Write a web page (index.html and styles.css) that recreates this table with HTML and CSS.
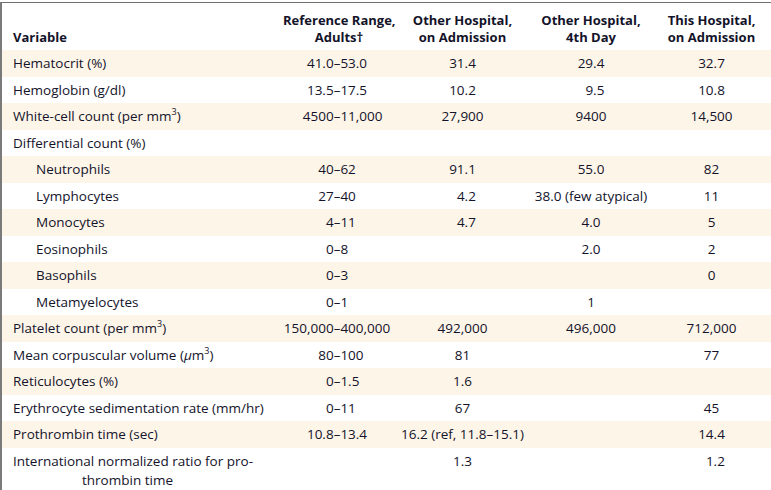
FILE: index.html
```html
<!DOCTYPE html>
<html>
<head>
<meta charset="utf-8">
<link rel="stylesheet" href="styles.css">
</head>
<body>
<div class="frame">
<table class="labs">
<colgroup>
<col class="c-var"><col class="c-ref"><col class="c-oh1"><col class="c-oh4"><col class="c-th">
</colgroup>
<thead>
<tr>
<th class="var">Variable</th>
<th>Reference Range,<br>Adults†</th>
<th>Other Hospital,<br>on Admission</th>
<th>Other Hospital,<br>4th Day</th>
<th>This Hospital,<br>on Admission</th>
</tr>
</thead>
<tbody>
<tr class="odd"><td class="var">Hematocrit (%)</td><td><span class="rng"><span class="lo">41.0</span>–<span class="hi">53.0</span></span></td><td>31.4</td><td>29.4</td><td>32.7</td></tr>
<tr><td class="var">Hemoglobin (g/dl)</td><td><span class="rng"><span class="lo">13.5</span>–<span class="hi">17.5</span></span></td><td>10.2</td><td><span class="pad">0</span>9.5</td><td>10.8</td></tr>
<tr class="odd"><td class="var">White-cell count (per mm<sup>3</sup>)</td><td><span class="rng"><span class="lo">4500</span>–<span class="hi">11,000</span></span></td><td>27,900</td><td>9400</td><td>14,500</td></tr>
<tr><td class="var">Differential count (%)</td><td></td><td></td><td></td><td></td></tr>
<tr class="odd"><td class="var sub">Neutrophils</td><td><span class="rng"><span class="lo">40</span>–<span class="hi">62</span></span></td><td>91.1</td><td>55.0</td><td>82</td></tr>
<tr><td class="var sub">Lymphocytes</td><td><span class="rng"><span class="lo">27</span>–<span class="hi">40</span></span></td><td><span class="pad">0</span>4.2</td><td>38.0 (few atypical)</td><td>11</td></tr>
<tr class="odd"><td class="var sub">Monocytes</td><td><span class="rng"><span class="lo">4</span>–<span class="hi">11</span></span></td><td><span class="pad">0</span>4.7</td><td>4.0</td><td>5</td></tr>
<tr><td class="var sub">Eosinophils</td><td><span class="rng"><span class="lo">0</span>–<span class="hi">8</span></span></td><td></td><td>2.0</td><td>2</td></tr>
<tr class="odd"><td class="var sub">Basophils</td><td><span class="rng"><span class="lo">0</span>–<span class="hi">3</span></span></td><td></td><td></td><td>0</td></tr>
<tr><td class="var sub">Metamyelocytes</td><td><span class="rng"><span class="lo">0</span>–<span class="hi">1</span></span></td><td></td><td>1</td><td></td></tr>
<tr class="odd"><td class="var">Platelet count (per mm<sup>3</sup>)</td><td><span class="rng"><span class="lo">150,000</span>–<span class="hi">400,000</span></span></td><td>492,000</td><td>496,000</td><td>712,000</td></tr>
<tr><td class="var">Mean corpuscular volume (<i>μ</i>m<sup>3</sup>)</td><td><span class="rng"><span class="lo">80</span>–<span class="hi">100</span></span></td><td>81</td><td></td><td>77</td></tr>
<tr class="odd"><td class="var">Reticulocytes (%)</td><td><span class="rng"><span class="lo">0</span>–<span class="hi">1.5</span></span></td><td>1.6</td><td></td><td></td></tr>
<tr><td class="var">Erythrocyte sedimentation rate (mm/hr)</td><td><span class="rng"><span class="lo">0</span>–<span class="hi">11</span></span></td><td>67</td><td></td><td>45</td></tr>
<tr class="odd"><td class="var">Prothrombin time (sec)</td><td><span class="rng"><span class="lo">10.8</span>–<span class="hi">13.4</span></span></td><td>16.2 (ref, 11.8–15.1)</td><td></td><td>14.4</td></tr>
<tr class="tall"><td class="var hang">International normalized ratio for pro-<br>thrombin time</td><td></td><td>1.3</td><td></td><td><span class="pad">0</span>1.2</td></tr>
</tbody>
</table>
</div>
</body>
</html>
```

FILE: styles.css
```css
html, body {
  margin: 0;
  padding: 0;
  background: #ffffff;
}

body {
  padding-top: 2px;
  font-family: "Open Sans", "Noto Sans", sans-serif;
  font-size: 13.5px;
  color: #13132a;
}

.frame {
  border-top: 1px solid #6f6f6f;
  border-left: 2px solid #7a7a7a;
  height: 487px;
  overflow: hidden;
}

.labs {
  border-collapse: collapse;
  table-layout: fixed;
  width: 769px;
}

.c-var { width: 281px; }
.c-ref { width: 112px; }
.c-oh1 { width: 135px; }
.c-oh4 { width: 122px; }
.c-th { width: 119px; }

.labs th {
  height: 47px;
  padding: 0 0 4px;
  box-sizing: border-box;
  font-size: 13px;
  font-weight: 700;
  line-height: 17px;
  text-align: center;
  vertical-align: bottom;
  white-space: nowrap;
}

.labs th.var {
  text-align: left;
  padding-left: 11px;
}

.labs td {
  height: 26.5px;
  padding: 0;
  line-height: 18px;
  text-align: center;
  vertical-align: middle;
  white-space: nowrap;
}

.labs tr.odd td {
  background: #fef5e9;
}

.labs td.var {
  text-align: left;
  padding-left: 11px;
}

.labs td.sub {
  padding-left: 34px;
}

.labs tr.tall td {
  height: 46px;
  vertical-align: top;
  padding-top: 4px;
}

.labs tr.tall td.var {
  padding-left: 80px;
  text-indent: -69px;
  line-height: 19px;
}

sup {
  font-size: 9px;
  line-height: 0;
  vertical-align: 6px;
}

.pad {
  visibility: hidden;
}

.rng {
  display: grid;
  grid-template-columns: 1fr auto 1fr;
  padding-right: 4px;
}

.rng .lo {
  text-align: right;
}

.rng .hi {
  text-align: left;
}
```
